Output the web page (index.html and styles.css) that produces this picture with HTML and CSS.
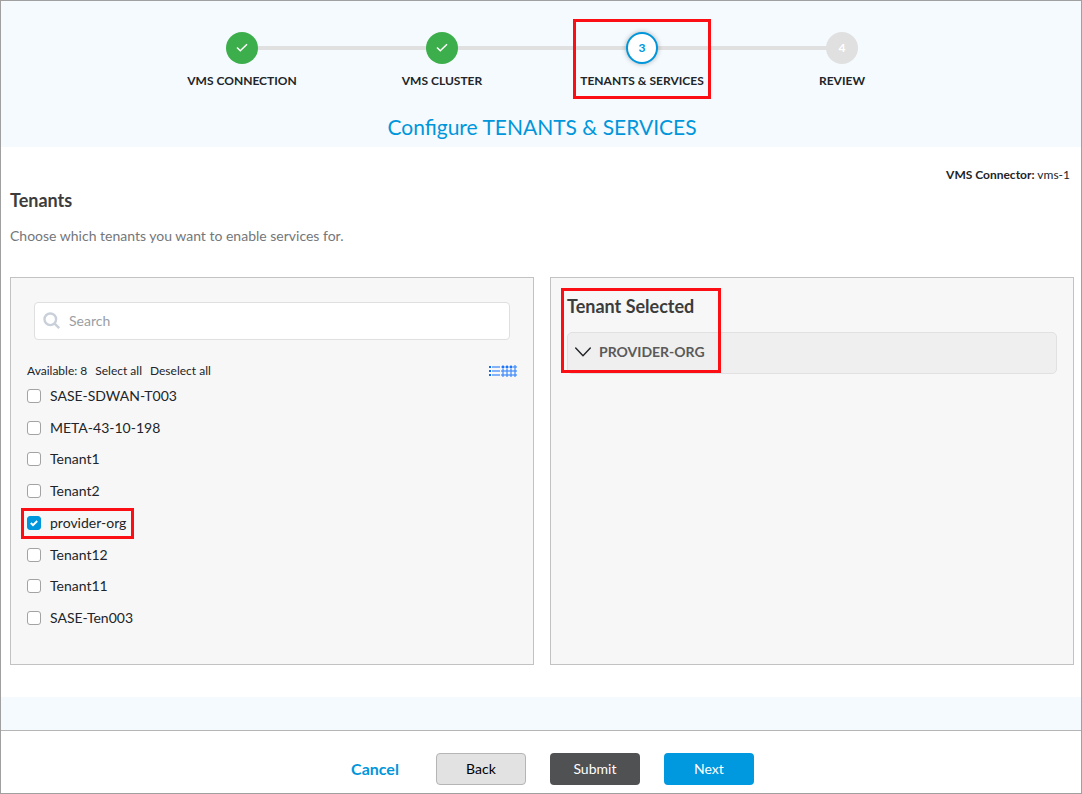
FILE: index.html
```html
<!DOCTYPE html>
<html lang="en">
<head>
  <meta charset="UTF-8" />
  <title>Configure Tenants &amp; Services</title>
  <meta name="viewport" content="width=device-width, initial-scale=1.0"/>
  <link rel="stylesheet" href="styles.css">
</head>
<body>
  <div class="wizard">
    <header class="wizard-header">
      <ol class="steps">
        <li class="step done">
          <span class="step-circle">
            <svg width="12" height="10" viewBox="0 0 12 10" fill="none" stroke="#fff" stroke-width="1.5"><path d="M1 4.5L4.3 7.8L11 1.2"/></svg>
          </span>
          <span class="step-label">VMS CONNECTION</span>
        </li>
        <li class="step done">
          <span class="step-circle">
            <svg width="12" height="10" viewBox="0 0 12 10" fill="none" stroke="#fff" stroke-width="1.5"><path d="M1 4.5L4.3 7.8L11 1.2"/></svg>
          </span>
          <span class="step-label">VMS CLUSTER</span>
        </li>
        <li class="step current">
          <span class="step-circle">3</span>
          <span class="step-label">TENANTS &amp; SERVICES</span>
          <span class="highlight highlight-step"></span>
        </li>
        <li class="step">
          <span class="step-circle">4</span>
          <span class="step-label">REVIEW</span>
        </li>
      </ol>
      <h1>Configure TENANTS &amp; SERVICES</h1>
    </header>

    <main class="content">
      <p class="connector"><strong>VMS Connector:</strong> vms-1</p>
      <h2>Tenants</h2>
      <p class="intro">Choose which tenants you want to enable services for.</p>

      <div class="panels">
        <section class="panel available">
          <div class="search">
            <svg width="18" height="18" viewBox="0 0 18 18" fill="none" stroke="#c9d0d9" stroke-width="2.4"><circle cx="7.3" cy="7.3" r="5.8"/><path d="M11.6 11.6L16.2 16.2"/></svg>
            <input type="text" placeholder="Search" aria-label="Search">
          </div>
          <div class="toolbar">
            <span>Available: 8</span>
            <button type="button" class="link-btn">Select all</button>
            <button type="button" class="link-btn">Deselect all</button>
            <div class="views">
              <button type="button" class="view-btn" aria-label="List view">
                <svg width="13" height="12" viewBox="0 0 13 12" fill="#0d6efd"><path d="M1 1h2v2H1zM1 5h2v2H1zM1 9h2v2H1zM4 1.5h8v1H4zM4 5.5h8v1H4zM4 9.5h8v1H4z"/></svg>
              </button>
              <button type="button" class="view-btn" aria-label="Grid view">
                <svg width="16" height="12" viewBox="0 0 16 12" fill="none" stroke="#0d6efd">
                  <g fill="#0d6efd"><circle cx="2" cy="2" r="1.1"/><circle cx="6" cy="2" r="1.1"/><circle cx="10" cy="2" r="1.1"/></g>
                  <circle cx="14" cy="2" r="1.2"/>
                  <circle cx="2" cy="6" r="1.2"/><circle cx="6" cy="6" r="1.2"/><circle cx="10" cy="6" r="1.2"/><circle cx="14" cy="6" r="1.2"/>
                  <circle cx="2" cy="10" r="1.2"/><circle cx="6" cy="10" r="1.2"/><circle cx="10" cy="10" r="1.2"/><circle cx="14" cy="10" r="1.2"/>
                </svg>
              </button>
            </div>
          </div>
          <ul class="tenant-list">
            <li><label><input type="checkbox">SASE-SDWAN-T003</label></li>
            <li><label><input type="checkbox">META-43-10-198</label></li>
            <li><label><input type="checkbox">Tenant1</label></li>
            <li><label><input type="checkbox">Tenant2</label></li>
            <li><label><input type="checkbox" checked>provider-org<span class="highlight highlight-tenant"></span></label></li>
            <li><label><input type="checkbox">Tenant12</label></li>
            <li><label><input type="checkbox">Tenant11</label></li>
            <li><label><input type="checkbox">SASE-Ten003</label></li>
          </ul>
        </section>

        <section class="panel selected">
          <h2>Tenant Selected</h2>
          <button type="button" class="accordion" aria-expanded="false">
            <svg width="16" height="10" viewBox="0 0 16 10" fill="none" stroke="#212529" stroke-width="1.4" stroke-linecap="round" stroke-linejoin="round"><path d="M.7 1L8 8.8L15.3 1"/></svg>
            PROVIDER-ORG
          </button>
          <span class="highlight highlight-selected"></span>
        </section>
      </div>
    </main>

    <footer class="actions">
      <button type="button" class="btn btn-cancel">Cancel</button>
      <button type="button" class="btn btn-back">Back</button>
      <button type="button" class="btn btn-submit">Submit</button>
      <button type="button" class="btn btn-next">Next</button>
    </footer>
  </div>
</body>
</html>
```
FILE: styles.css
```css
* {
  margin: 0;
  padding: 0;
  box-sizing: border-box;
}

body {
  font-family: Lato, 'Liberation Sans', sans-serif;
  font-size: 14px;
  line-height: 20px;
  color: #212529;
}

button,
input {
  font: inherit;
  color: inherit;
}

button {
  border: none;
  background: none;
  cursor: pointer;
}

ol,
ul {
  list-style: none;
}

svg {
  display: block;
}

.wizard {
  display: flex;
  flex-direction: column;
  min-height: 100vh;
  border: 1px solid #a0a0a0;
  background: #f4fafd;
}

/* Step indicator */
.wizard-header {
  padding: 31px 0 9px 2px;
  text-align: center;
}

.steps {
  display: grid;
  grid-template-columns: repeat(4, 1fr);
  max-width: 800px;
  margin: 0 auto 25px;
}

.step {
  position: relative;
  display: flex;
  flex-direction: column;
  align-items: center;
  gap: 7px;
}

.step + .step::before {
  content: '';
  position: absolute;
  top: 14px;
  right: 50%;
  width: 100%;
  height: 4px;
  background: #e0e0e0;
}

.step-circle {
  position: relative;
  z-index: 1;
  display: flex;
  align-items: center;
  justify-content: center;
  width: 32px;
  height: 32px;
  border-radius: 50%;
  background: #e0e0e0;
  color: white;
  font-size: 12px;
  font-weight: 700;
}

.done .step-circle {
  background: #3dae4c;
}

.current .step-circle {
  border: 2px solid #0096db;
  background: white;
  color: #0096db;
  box-shadow: 0 0 5px rgba(0, 0, 0, 0.3);
}

.step-label {
  font-size: 12px;
  font-weight: 700;
}

h1 {
  color: #0096db;
  font-size: 21px;
  font-weight: 400;
  line-height: 22px;
}

h2 {
  color: #3c3c3c;
  font-size: 18px;
  font-weight: 700;
  line-height: 24px;
}

/* Main area */
.content {
  padding: 18px 7px 32px 9px;
  background: white;
}

.connector {
  padding-right: 4px;
  font-size: 12px;
  text-align: right;
}

.content > h2 {
  margin-top: 3px;
}

.intro {
  margin: 14px 0 31px;
  color: #74777a;
}

.panels {
  display: grid;
  grid-template-columns: 1fr 1fr;
  gap: 16px;
}

.panel {
  position: relative;
  min-height: 388px;
  border: 1px solid #c2c2c2;
  background: #f7f7f7;
}

.available {
  padding: 24px 16px 30px;
}

.search {
  display: flex;
  align-items: center;
  gap: 8px;
  height: 38px;
  margin: 0 7px 21px;
  padding: 0 8px;
  border: 1px solid #dfdfdf;
  border-radius: 4px;
  background: white;
}

.search input {
  flex: 1;
  min-width: 0;
  border: none;
  outline: none;
  background: none;
}

.search input::placeholder {
  color: #9a9ea3;
  opacity: 1;
}

.toolbar {
  display: flex;
  align-items: center;
  gap: 8px;
  height: 19px;
  font-size: 12px;
}

.views {
  display: flex;
  margin-left: auto;
}

.tenant-list {
  display: grid;
  grid-auto-rows: 1fr;
  height: 254px;
}

.tenant-list li {
  display: flex;
  align-items: center;
}

.tenant-list label {
  position: relative;
  display: flex;
  align-items: center;
  gap: 9px;
}

.tenant-list input {
  appearance: none;
  width: 14px;
  height: 14px;
  border: 1px solid #a3a3a3;
  border-radius: 3px;
  background: white;
}

.tenant-list input:checked {
  border-color: #0096db;
  background: #0096db url("data:image/svg+xml,%3Csvg xmlns='http://www.w3.org/2000/svg' viewBox='0 0 12 12' fill='none' stroke='white' stroke-width='2'%3E%3Cpath d='M2.8 6L5 8.2L9.2 4'/%3E%3C/svg%3E") center / 12px no-repeat;
}

.selected {
  padding: 16px;
}

.accordion {
  display: flex;
  align-items: center;
  gap: 8px;
  width: 100%;
  height: 42px;
  margin-top: 14px;
  padding: 0 7px 2px;
  border: 1px solid #e1e1e1;
  border-radius: 5px;
  background: #efefef;
  color: #5a5a5a;
  font-weight: 700;
}

/* Red callout frames */
.highlight {
  position: absolute;
  z-index: 2;
  border: 3px solid #fb0f14;
  pointer-events: none;
}

.highlight-step {
  top: -13px;
  left: 50%;
  width: 138px;
  height: 80px;
  margin-left: -69px;
}

.highlight-tenant {
  inset: -5px -8px -6px -6px;
}

.highlight-selected {
  top: 10px;
  left: 10px;
  width: 160px;
  height: 85px;
}

/* Footer buttons */
.actions {
  display: flex;
  justify-content: center;
  gap: 24px;
  margin-top: auto;
  padding: 22px 0 8px;
  border-top: 1px solid #b5b5b5;
  background: white;
}

.btn {
  width: 90px;
  height: 32px;
  border-radius: 4px;
}

.btn-cancel {
  width: auto;
  padding: 0 13px 0 23px;
  color: #0096db;
  font-size: 16px;
  font-weight: 700;
}

.btn-back {
  border: 1px solid #b5b5b5;
  background: #e2e2e2;
  color: black;
}

.btn-submit {
  background: #505153;
  color: white;
}

.btn-next {
  background: #0098de;
  color: white;
}
```
